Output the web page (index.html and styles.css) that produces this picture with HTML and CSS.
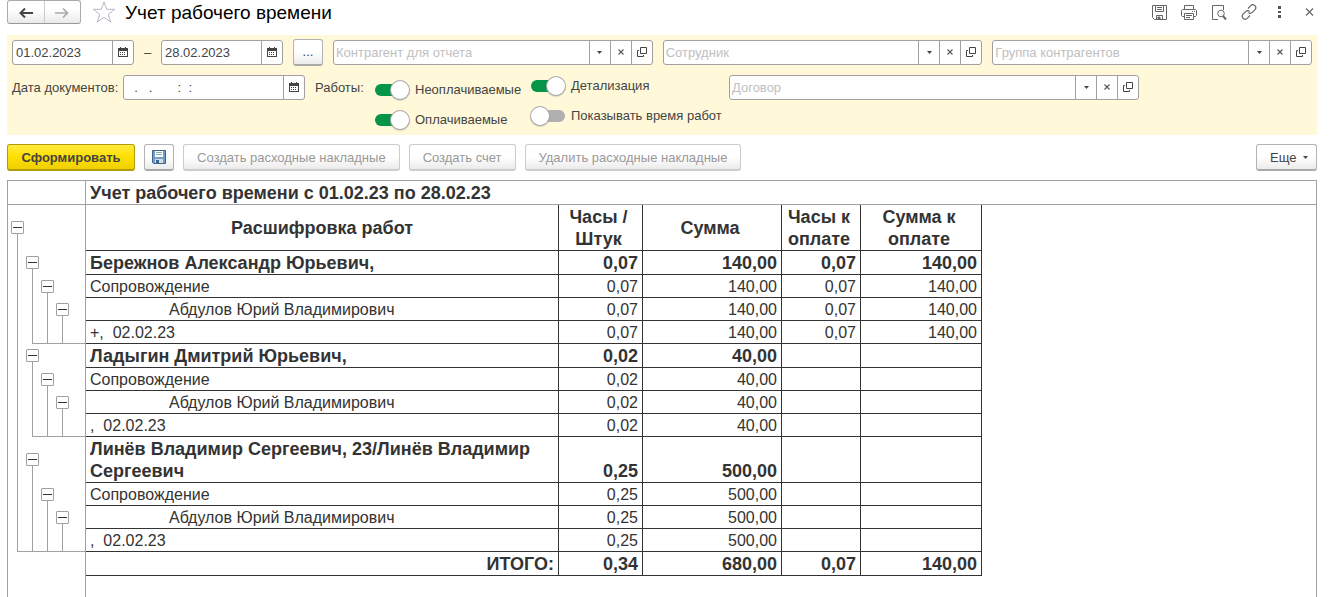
FILE: index.html
```
<!DOCTYPE html>
<html lang="ru">
<head>
<meta charset="utf-8">
<title>Учет рабочего времени</title>
<link rel="stylesheet" href="styles.css">
</head>
<body>
<svg class="defs" aria-hidden="true">
  <symbol id="i-cal" viewBox="0 0 10 10"><path fill="#444" d="M0 1h2V0h1v1h4V0h1v1h2v9H0zM1 4v5h8V4z"/><path fill="#444" d="M2 5h1v1H2zM4 5h1v1H4zM6 5h1v1H6zM2 7h1v1H2zM4 7h1v1H4zM6 7h1v1H6z"/></symbol>
  <symbol id="i-down" viewBox="0 0 5 3"><path fill="#444" d="M0 0h5L2.500 3z"/></symbol>
  <symbol id="i-x" viewBox="0 0 6 6"><path fill="none" stroke="#555" stroke-width="1.100" d="M.5.5l5 5M5.500.5l-5 5"/></symbol>
  <symbol id="i-open" viewBox="0 0 10 10"><path fill="none" stroke="#444" d="M3.500.5h6v6h-6zM2 3.500H.5v6h6V8"/></symbol>
</svg>

<header class="header">
  <div class="nav">
    <button class="nav-btn" aria-label="Назад"><svg width="14" height="10" viewBox="0 0 14 10"><path d="M14 5H3M6 .5L1.500 5 6 9.500" fill="none" stroke="#444" stroke-width="2"/></svg></button>
    <button class="nav-btn" aria-label="Вперед" disabled><svg width="14" height="10" viewBox="0 0 14 10"><path d="M0 5h12M8 .5L12.500 5 8 9.500" fill="none" stroke="#aaa" stroke-width="1.700"/></svg></button>
  </div>
  <button class="icon-btn star" aria-label="Избранное"><svg width="24" height="24" viewBox="0 0 24 24"><path d="M12 2l2.700 7.300h8l-6.400 4.900 2.400 7.800L12 17.300 5.300 22l2.400-7.800L1.300 9.300h8z" fill="#fff" stroke="#b4b9c0"/></svg></button>
  <h1 class="title">Учет рабочего времени</h1>
  <div class="window-tools">
    <button class="icon-btn" aria-label="Сохранить"><svg width="15" height="15" viewBox="0 0 15 15" fill="none" stroke="#666"><path d="M.5.5h14v14h-12l-2-2zM3.500.5v6h8v-6M5 2.500h5M5 4.500h5"/><path d="M4.500 14.500v-4h6v4"/><path fill="#666" d="M6 12h2v2H6z"/></svg></button>
    <button class="icon-btn" aria-label="Печать"><svg width="16" height="15" viewBox="0 0 16 15" fill="none" stroke="#666"><path d="M3.500 4V.5h9V4M3.500 11.500h-2l-1-1v-5l1-1h13l1 1v5l-1 1h-2M3.500 8.500h9v6h-9zM5 10.500h6M5 12.500h4M11 6.500h1M13 6.500h1"/></svg></button>
    <button class="icon-btn" aria-label="Просмотр"><svg width="16" height="15" viewBox="0 0 16 15" fill="none" stroke="#666"><path d="M7 14.500H1.500V.5h11V5"/><circle cx="10" cy="8.500" r="3.300"/><path stroke-width="2" d="M12 11l3 3.500"/></svg></button>
    <button class="icon-btn" aria-label="Ссылка"><svg width="16" height="16" viewBox="0 0 16 16" fill="none" stroke="#666" stroke-width="1.200"><path d="M7 4.500l2.500-2.700c2.700-2.700 7 .8 4.500 3.900l-2.600 2.700c-1.200 1.100-2.800 1.100-4 .2"/><path d="M9 11.500l-2.500 2.700c-2.700 2.700-7-.8-4.500-3.900l2.600-2.700c1.200-1.100 2.800-1.100 4-.2"/></svg></button>
    <button class="icon-btn" aria-label="Меню"><svg width="16" height="16" viewBox="0 0 16 16" fill="#555"><path d="M7 2h3v3H7zM7 7h3v2H7zM7 11h3v3H7z"/></svg></button>
    <button class="icon-btn" aria-label="Закрыть"><svg width="16" height="16" viewBox="0 0 16 16" fill="none" stroke="#666" stroke-width="1.200"><path d="M5 4.500l7 7M12 4.500l-7 7"/></svg></button>
  </div>
</header>

<section class="filters">
  <div class="filter-row">
    <div class="field date"><input aria-label="Начало периода" value="01.02.2023"><button aria-label="Календарь"><svg width="10" height="10"><use href="#i-cal"/></svg></button></div>
    <span class="dash">–</span>
    <div class="field date"><input aria-label="Конец периода" value="28.02.2023"><button aria-label="Календарь"><svg width="10" height="10"><use href="#i-cal"/></svg></button></div>
    <button class="btn more">...</button>
    <div class="field wide"><input aria-label="Контрагент" placeholder="Контрагент для отчета"><button aria-label="Выбрать"><svg width="5" height="3"><use href="#i-down"/></svg></button><button aria-label="Очистить"><svg width="6" height="6"><use href="#i-x"/></svg></button><button aria-label="Открыть"><svg width="10" height="10"><use href="#i-open"/></svg></button></div>
    <div class="field wide"><input aria-label="Сотрудник" placeholder="Сотрудник"><button aria-label="Выбрать"><svg width="5" height="3"><use href="#i-down"/></svg></button><button aria-label="Очистить"><svg width="6" height="6"><use href="#i-x"/></svg></button><button aria-label="Открыть"><svg width="10" height="10"><use href="#i-open"/></svg></button></div>
    <div class="field wide"><input aria-label="Группа контрагентов" placeholder="Группа контрагентов"><button aria-label="Выбрать"><svg width="5" height="3"><use href="#i-down"/></svg></button><button aria-label="Очистить"><svg width="6" height="6"><use href="#i-x"/></svg></button><button aria-label="Открыть"><svg width="10" height="10"><use href="#i-open"/></svg></button></div>
  </div>
  <div class="filter-row second">
    <label class="caption doc" for="docdate">Дата документов:</label>
    <div class="field datetime"><input id="docdate" value="  .   .       :  :"><button aria-label="Календарь"><svg width="10" height="10"><use href="#i-cal"/></svg></button></div>
    <span class="caption works">Работы:</span>
    <div class="toggles first">
      <label class="toggle"><input type="checkbox" checked>Неоплачиваемые</label>
      <label class="toggle"><input type="checkbox" checked>Оплачиваемые</label>
    </div>
    <div class="toggles">
      <label class="toggle"><input type="checkbox" checked>Детализация</label>
      <label class="toggle"><input type="checkbox">Показывать время работ</label>
    </div>
    <div class="field contract"><input aria-label="Договор" placeholder="Договор"><button aria-label="Выбрать"><svg width="5" height="3"><use href="#i-down"/></svg></button><button aria-label="Очистить"><svg width="6" height="6"><use href="#i-x"/></svg></button><button aria-label="Открыть"><svg width="10" height="10"><use href="#i-open"/></svg></button></div>
  </div>
</section>

<div class="toolbar">
  <button class="btn primary">Сформировать</button>
  <button class="btn save" aria-label="Сохранить"><svg width="14" height="14" viewBox="0 0 14 14"><path fill="#6f9dcd" stroke="#3f648c" d="M.5.5h13v13h-12l-1-1z"/><path fill="#fff" d="M3 1h8v6H3z"/><path stroke="#8aa" d="M4 2.500h6M4 4.500h6"/><path fill="#d5dde0" d="M3 9h8v4H3z"/><path fill="#3f648c" d="M4 10h3v3H4z"/></svg></button>
  <button class="btn" disabled>Создать расходные накладные</button>
  <button class="btn" disabled>Создать счет</button>
  <button class="btn" disabled>Удалить расходные накладные</button>
  <button class="btn menu">Еще <svg width="5" height="3"><use href="#i-down"/></svg></button>
</div>

<main class="report">
  <table class="sheet">
    <colgroup><col class="c-tree"><col class="c-name"><col class="c-hours"><col class="c-sum"><col class="c-hours-pay"><col class="c-sum-pay"><col></colgroup>
    <tbody>
    <tr class="heading"><td></td><th colspan="6">Учет рабочего времени с 01.02.23 по 28.02.23</th></tr>
    <tr class="head tall"><td class="tree"><div class="rails"><i class="start"><button aria-label="Свернуть"></button></i></div></td><th>Расшифровка работ</th><th>Часы /<br>Штук</th><th>Сумма</th><th>Часы к<br>оплате</th><th>Сумма к<br>оплате</th></tr>

    <tr class="group"><td class="tree"><div class="rails"><i class="line"></i><i class="start"><button aria-label="Свернуть"></button></i></div></td><td>Бережнов Александр Юрьевич,</td><td>0,07</td><td>140,00</td><td>0,07</td><td>140,00</td></tr>
    <tr><td class="tree"><div class="rails"><i class="line"></i><i class="line"></i><i class="start"><button aria-label="Свернуть"></button></i></div></td><td>Сопровождение</td><td>0,07</td><td>140,00</td><td>0,07</td><td>140,00</td></tr>
    <tr><td class="tree"><div class="rails"><i class="line"></i><i class="line"></i><i class="line"></i><i class="start"><button aria-label="Свернуть"></button></i></div></td><td class="person">Абдулов Юрий Владимирович</td><td>0,07</td><td>140,00</td><td>0,07</td><td>140,00</td></tr>
    <tr><td class="tree"><div class="rails"><i class="line"></i><i class="line close"></i><i class="line close"></i><i class="line close"></i><i class="close"></i></div></td><td class="note">+,  02.02.23</td><td>0,07</td><td>140,00</td><td>0,07</td><td>140,00</td></tr>

    <tr class="group"><td class="tree"><div class="rails"><i class="line"></i><i class="start"><button aria-label="Свернуть"></button></i></div></td><td>Ладыгин Дмитрий Юрьевич,</td><td>0,02</td><td>40,00</td><td></td><td></td></tr>
    <tr><td class="tree"><div class="rails"><i class="line"></i><i class="line"></i><i class="start"><button aria-label="Свернуть"></button></i></div></td><td>Сопровождение</td><td>0,02</td><td>40,00</td><td></td><td></td></tr>
    <tr><td class="tree"><div class="rails"><i class="line"></i><i class="line"></i><i class="line"></i><i class="start"><button aria-label="Свернуть"></button></i></div></td><td class="person">Абдулов Юрий Владимирович</td><td>0,02</td><td>40,00</td><td></td><td></td></tr>
    <tr><td class="tree"><div class="rails"><i class="line"></i><i class="line close"></i><i class="line close"></i><i class="line close"></i><i class="close"></i></div></td><td class="note">,  02.02.23</td><td>0,02</td><td>40,00</td><td></td><td></td></tr>

    <tr class="group tall"><td class="tree"><div class="rails"><i class="line"></i><i class="start"><button aria-label="Свернуть"></button></i></div></td><td>Линёв Владимир Сергеевич, 23/Линёв Владимир Сергеевич</td><td>0,25</td><td>500,00</td><td></td><td></td></tr>
    <tr><td class="tree"><div class="rails"><i class="line"></i><i class="line"></i><i class="start"><button aria-label="Свернуть"></button></i></div></td><td>Сопровождение</td><td>0,25</td><td>500,00</td><td></td><td></td></tr>
    <tr><td class="tree"><div class="rails"><i class="line"></i><i class="line"></i><i class="line"></i><i class="start"><button aria-label="Свернуть"></button></i></div></td><td class="person">Абдулов Юрий Владимирович</td><td>0,25</td><td>500,00</td><td></td><td></td></tr>
    <tr><td class="tree"><div class="rails"><i class="line close"></i><i class="line close"></i><i class="line close"></i><i class="line close"></i><i class="close"></i></div></td><td class="note">,  02.02.23</td><td>0,25</td><td>500,00</td><td></td><td></td></tr>

    <tr class="group total"><td class="tree"></td><td>ИТОГО:</td><td>0,34</td><td>680,00</td><td>0,07</td><td>140,00</td></tr>
    </tbody>
  </table>
  <div class="gutter"></div>
</main>
</body>
</html>
```
FILE: styles.css
```
* { box-sizing: border-box; }

body {
  display: flex;
  flex-direction: column;
  height: 100vh;
  margin: 0;
  padding: 0 13px 0 7px;
  overflow: hidden;
  background: #fff;
  color: #444;
  font: 13px/16px "Liberation Sans", Arial, sans-serif;
}

button, input { font: inherit; color: inherit; }
button { padding: 0; }
svg { display: block; }
.defs { position: absolute; width: 0; height: 0; }

/* Header */
.header {
  display: flex;
  align-items: center;
  height: 24px;
  margin-bottom: 11px;
}
.nav {
  display: flex;
  width: 74px;
  height: 24px;
  border: 1px solid #aaa;
  border-bottom-color: #999;
  border-radius: 3px;
  background: linear-gradient(#fff 40%, #e9e9e9);
}
.nav-btn {
  display: grid;
  flex: 1;
  place-items: center;
  padding-top: 2px;
  border: 0;
  background: none;
}
.nav-btn + .nav-btn { border-left: 1px solid #ccc; }
.icon-btn { border: 0; background: none; }
.star { margin: 0 9px 0 11px; }
.title {
  margin: 0;
  padding-top: 2px;
  color: #000;
  font-size: 19px;
  font-weight: 400;
  line-height: 24px;
}
.window-tools {
  display: flex;
  align-items: center;
  gap: 14px;
  margin-left: auto;
}

/* Filter panel */
.filters {
  min-height: 100px;
  padding: 4px 5px 5px;
  background: #fff9d9;
}
.filter-row { display: flex; align-items: center; }
.second { align-items: flex-start; margin-top: 9px; }
.field {
  display: flex;
  height: 25px;
  border: 1px solid #a0a0a0;
  border-radius: 3px;
  background: #fff;
}
.field input {
  flex: 1;
  min-width: 0;
  padding: 0 2px;
  border: 0;
  background: none;
  outline: 0;
}
.date input, .datetime input { padding: 0 3px; }
.field input::placeholder { color: #c0c0c0; opacity: 1; }
.field button {
  display: grid;
  flex: none;
  place-items: center;
  width: 21px;
  padding-bottom: 1px;
  border: 0;
  border-left: 1px solid #a0a0a0;
  background: none;
}
.date { width: 122px; }
.datetime { width: 182px; }
.wide { flex: 1; margin-left: 10px; }
.dash { width: 27px; text-align: center; }
.contract { width: 410px; margin-left: auto; margin-right: 173px; }
.caption { line-height: 25px; white-space: nowrap; }
.doc { width: 111px; }
.works { width: 70px; padding-left: 10px; }

.toggles {
  display: flex;
  flex-direction: column;
  gap: 10px;
  width: 188px;
  margin-top: 1px;
}
.toggles.first {
  width: 156px;
  margin-top: 5px;
}
.toggle {
  display: flex;
  align-items: center;
  gap: 6px;
  height: 20px;
  white-space: nowrap;
}
.toggle input {
  display: flex;
  flex: none;
  align-items: center;
  width: 34px;
  height: 12px;
  margin: 0;
  border-radius: 6px;
  appearance: none;
  background: #b0b0b0;
}
.toggle input::before {
  content: "";
  width: 18px;
  height: 18px;
  border-radius: 50%;
  background: #fff;
  box-shadow: 0 0 0 1px #aaa, 0 1px 2px #888;
}
.toggle input:checked { justify-content: flex-end; background: #049548; }

/* Buttons */
.btn {
  height: 27px;
  padding: 1px 13px 0;
  border: 1px solid #b3b3b3;
  border-bottom: 2px solid #aaa;
  border-radius: 3px;
  background: linear-gradient(#fff 50%, #ebebeb);
  white-space: nowrap;
}
.btn:disabled { border-color: #ccc; color: #999; }
.more { width: 30px; padding: 0; margin-left: 10px; }
.primary {
  min-width: 128px;
  border-color: #b09c08;
  background: linear-gradient(#ffea3d, #ffdf00 50%, #f0d000);
  font-weight: 700;
}
.save { display: grid; place-items: center; width: 30px; padding: 0; }
.toolbar {
  display: flex;
  gap: 9px;
  padding: 9px 0;
}
.menu {
  display: flex;
  gap: 7px;
  align-items: center;
  min-width: 61px;
  margin-left: auto;
  padding-right: 6px;
}

/* Report */
.report {
  display: flex;
  flex: 1;
  flex-direction: column;
  border: 1px solid #a0a0a0;
  border-bottom: 0;
  color: #333;
}
.gutter {
  flex: 1;
  width: 78px;
  border-right: 1px solid #a0a0a0;
}
.sheet {
  width: 100%;
  border-spacing: 0;
  table-layout: fixed;
  font-size: 16px;
  line-height: 20px;
}
.c-tree { width: 78px; }
.c-name { width: 473px; }
.c-hours { width: 84px; }
.c-sum { width: 139px; }
.c-hours-pay { width: 79px; }
.c-sum-pay { width: 121px; }
.sheet td, .sheet th {
  height: 23px;
  padding: 0 4px;
  border-right: 1px solid #333;
  border-bottom: 1px solid #333;
  text-align: right;
  vertical-align: bottom;
}
.sheet td:nth-child(2) { text-align: left; }
.sheet .group td {
  height: 24px;
  font-size: 18px;
  font-weight: 700;
  line-height: 22px;
}
.sheet .tall td, .sheet .tall th { height: 46px; }
.sheet .head th {
  padding: 0 4px 0 0;
  font-size: 18px;
  line-height: 22px;
  text-align: center;
  vertical-align: middle;
}
.sheet .head th:nth-child(2) { padding: 0; }
.sheet .heading td, .sheet .heading th {
  height: 24px;
  border-color: #a0a0a0;
  font-size: 18px;
  line-height: 22px;
  text-align: left;
}
.sheet .heading th { border-right: 0; }
.sheet .total td:nth-child(2) { text-align: right; }
.sheet td.person { padding-left: 83px; }
.note { white-space: pre; }

/* Group outline */
.sheet .tree {
  padding: 0 0 0 2px;
  border-right-color: #a0a0a0;
  border-bottom: 0;
}
.rails {
  display: grid;
  grid-template-columns: repeat(5, 15px);
  height: 100%;
}
.rails i {
  display: grid;
  position: relative;
  place-items: center;
}
.rails .line::before, .rails .start::before {
  content: "";
  position: absolute;
  top: 0;
  bottom: 0;
  left: 7px;
  width: 1px;
  background: #a0a0a0;
}
.rails .start::before { top: 50%; }
.rails .close::after {
  content: "";
  position: absolute;
  right: 0;
  bottom: 0;
  left: 0;
  height: 1px;
  background: #a0a0a0;
}
.rails .close:not(.close + .close)::after { left: 7px; }
.rails button {
  display: grid;
  position: relative;
  place-items: center;
  width: 13px;
  height: 13px;
  margin-bottom: 1px;
  border: 1px solid #a0a0a0;
  border-radius: 1px;
  background: #fff;
}
.rails button::before {
  content: "";
  width: 9px;
  height: 1px;
  background: #333;
}
```
